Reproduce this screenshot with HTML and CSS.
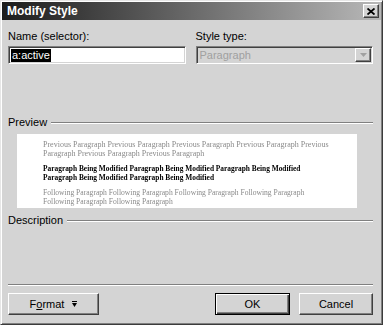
FILE: index.html
```html
<!DOCTYPE html>
<html lang="en">
<head>
    <meta charset="UTF-8">
    <title>Modify Style</title>
    <link rel="stylesheet" href="styles.css">
</head>
<body>

<div class="dialog">
    <div class="titlebar">
        <span class="title">Modify Style</span>
        <button class="close">
            <svg width="8" height="7" viewBox="0 0 8 7"><path d="M0.5 0.5 L7.5 6.5 M7.5 0.5 L0.5 6.5" stroke="#000" stroke-width="1.8"/></svg>
        </button>
    </div>

    <div class="content">
        <div class="fields">
            <div class="field">
                <label>Name (selector):</label>
                <div class="textbox"><span class="selected">a:active</span></div>
            </div>
            <div class="field">
                <label>Style type:</label>
                <div class="combo">
                    <span class="combo-text">Paragraph</span>
                    <span class="drop">
                        <svg width="7" height="4" viewBox="0 0 7 4"><path d="M0 0 H7 L3.5 4 Z" fill="#a0a0a0"/></svg>
                    </span>
                </div>
            </div>
        </div>

        <div class="section-head preview-head">
            <span>Preview</span>
            <span class="rule"></span>
        </div>
        <div class="preview">
            <p class="prev">Previous Paragraph Previous Paragraph Previous Paragraph Previous Paragraph Previous Paragraph Previous Paragraph Previous Paragraph</p>
            <p class="current">Paragraph Being Modified Paragraph Being Modified Paragraph Being Modified Paragraph Being Modified Paragraph Being Modified</p>
            <p class="prev next">Following Paragraph Following Paragraph Following Paragraph Following Paragraph Following Paragraph Following Paragraph</p>
        </div>

        <div class="section-head">
            <span>Description</span>
            <span class="rule"></span>
        </div>
        <div class="description"></div>

        <div class="separator"></div>

        <div class="buttons">
            <button class="btn format">
                <span>F<u>o</u>rmat</span>
                <svg width="5" height="6" viewBox="0 0 5 6"><path d="M0 0.5 H5" stroke="#000"/><path d="M0 2 H5 L2.5 6 Z" fill="#000"/></svg>
            </button>
            <span class="spacer"></span>
            <button class="btn default">OK</button>
            <button class="btn">Cancel</button>
        </div>
    </div>
</div>

</body>
</html>
```

FILE: styles.css
```css
body {
    margin: 0;
    padding: 0;
    background: #d4d4d4;
    font-family: 'Liberation Sans', Arial, sans-serif;
    font-size: 11px;
    color: #000;
}
.dialog {
    width: 383px;
    height: 325px;
    box-sizing: border-box;
    display: flex;
    flex-direction: column;
    background: #d4d4d4;
    border-style: solid;
    border-width: 1px;
    border-color: #e6e6e6 #3c3c3c #3c3c3c #e6e6e6;
    box-shadow: inset 1px 1px #ffffff, inset -1px -1px #808080;
    padding: 1px;
}
.titlebar {
    height: 18px;
    display: flex;
    align-items: center;
    background: linear-gradient(to right, #1c1c1c, #5a5a5a 40%, #b8b8b8);
    padding: 0 2px 0 5px;
}
.title {
    flex: 1;
    color: #fff;
    font-weight: bold;
    font-size: 12px;
}
.close {
    width: 16px;
    height: 14px;
    padding: 0;
    display: flex;
    align-items: center;
    justify-content: center;
    background: #d4d4d4;
    border: 1px solid;
    border-color: #fff #404040 #404040 #fff;
    box-shadow: inset -1px -1px #808080;
}
.content {
    flex: 1;
    display: flex;
    flex-direction: column;
    padding: 10px 8px 8px 6px;
}
.fields {
    display: grid;
    grid-template-columns: 1fr 1fr;
    gap: 10px;
}
.field label {
    display: block;
    line-height: 13px;
    margin-bottom: 3px;
}
.textbox,
.combo {
    height: 18px;
    box-sizing: border-box;
    border: 1px solid;
    border-color: #808080 #fff #fff #808080;
    box-shadow: inset 1px 1px #404040, inset -1px -1px #d4d4d4;
    display: flex;
    align-items: center;
    padding: 0 2px;
}
.textbox {
    background: #fff;
}
.selected {
    background: #000;
    color: #fff;
    line-height: 13px;
    padding: 0 1px;
}
.combo {
    background: #d4d4d4;
    padding-right: 1px;
}
.combo-text {
    flex: 1;
    color: #a0a0a0;
    padding-left: 1px;
}
.drop {
    width: 16px;
    height: 14px;
    box-sizing: border-box;
    display: flex;
    align-items: center;
    justify-content: center;
    border: 1px solid;
    border-color: #fff #404040 #404040 #fff;
    box-shadow: inset -1px -1px #808080;
}
.section-head {
    display: flex;
    align-items: center;
    gap: 4px;
    line-height: 13px;
    margin-top: 6px;
}
.preview-head {
    margin-top: 52px;
}
.rule {
    flex: 1;
    height: 0;
    border-top: 1px solid #808080;
    border-bottom: 1px solid #fff;
}
.preview {
    margin: 5px 16px 0 9px;
    height: 74px;
    box-sizing: border-box;
    background: #fff;
    padding: 6px 26px 0 26px;
    overflow: hidden;
    font-family: 'Liberation Serif', 'Times New Roman', serif;
    font-size: 8px;
    line-height: 9px;
    will-change: transform;
}
.preview p {
    margin: 0 0 6px 0;
    max-height: 18px;
    overflow: hidden;
}
.prev {
    color: #8a8a8a;
}
.current {
    font-weight: bold;
    font-size: 7.4px;
}
.next {
    font-size: 7.6px;
}
.description {
    flex: 1;
}
.separator {
    height: 0;
    border-top: 1px solid #808080;
    border-bottom: 1px solid #fff;
    margin-bottom: 7px;
}
.buttons {
    display: flex;
    gap: 9px;
}
.spacer {
    flex: 1;
}
.btn {
    height: 22px;
    width: 74px;
    padding: 0;
    font-family: 'Liberation Sans', Arial, sans-serif;
    font-size: 11px;
    color: #000;
    background: #d4d4d4;
    border: 1px solid;
    border-color: #fff #404040 #404040 #fff;
    box-shadow: inset -1px -1px #808080;
}
.btn.format {
    width: 91px;
    display: flex;
    align-items: center;
    justify-content: center;
    gap: 8px;
}
.btn.default {
    width: 75px;
    border: 1px solid #000;
    box-shadow: inset 1px 1px #fff, inset -1px -1px #404040, inset -2px -2px #808080;
}
```
